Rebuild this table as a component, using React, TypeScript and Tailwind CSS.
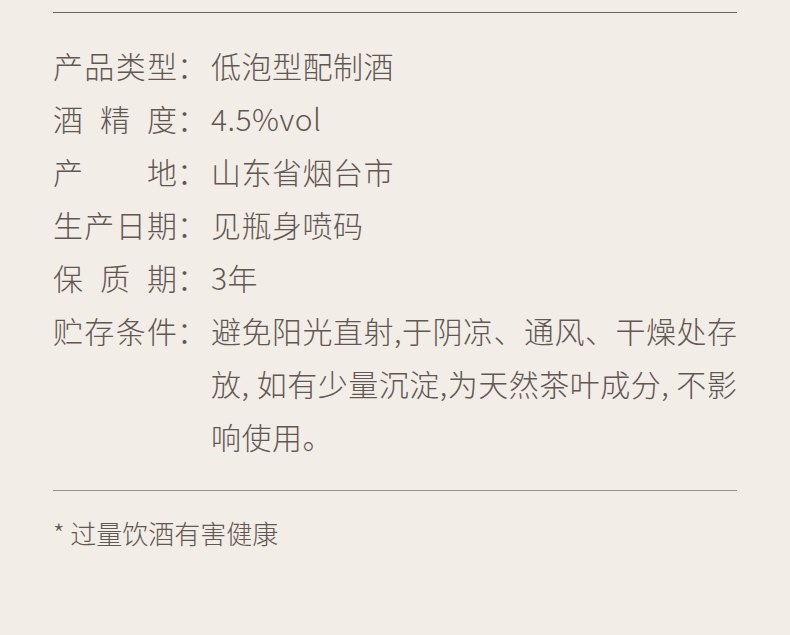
import React from 'react';

const rows: {label: string[]; value: string}[] = [
    {label: ['产', '品', '类', '型'], value: '低泡型配制酒'},
    {label: ['酒', '精', '度'], value: '4.5%vol'},
    {label: ['产', '地'], value: '山东省烟台市'},
    {label: ['生', '产', '日', '期'], value: '见瓶身喷码'},
    {label: ['保', '质', '期'], value: '3年'},
    {
        label: ['贮', '存', '条', '件'],
        value: '避免阳光直射,于阴凉、通风、干燥处存放, 如有少量沉淀,为天然茶叶成分, 不影响使用。',
    },
];

const App: React.FC = () => {
    return (
        <div
            className="h-[635px] w-full overflow-hidden bg-[#f2ede7] pl-[53px] pt-[12px] text-[#625753] font-light"
            style={{fontFamily: '"Noto Sans CJK SC", "Noto Sans", sans-serif'}}
        >
            <div className="h-px w-[684px] bg-[#6d625d]" />
            <div className="flex flex-col pt-[26px] pb-[27px] text-[30px] leading-[53px]">
                {rows.map((row, i) => (
                    <div key={i} className="flex">
                        <div className="flex w-[158px] shrink-0">
                            <div className="flex w-[124px] justify-between">
                                {row.label.map((c, j) => (
                                    <span key={j}>{c}</span>
                                ))}
                            </div>
                            <span>：</span>
                        </div>
                        <div className="w-[534px] shrink-0 break-all tracking-[0.5px]">{row.value}</div>
                    </div>
                ))}
            </div>
            <div className="h-px w-[684px] bg-[#9b8f8a]" />
            <div className="pt-[24px] text-[26px] leading-[36px]">* 过量饮酒有害健康</div>
        </div>
    );
};

export default App;
